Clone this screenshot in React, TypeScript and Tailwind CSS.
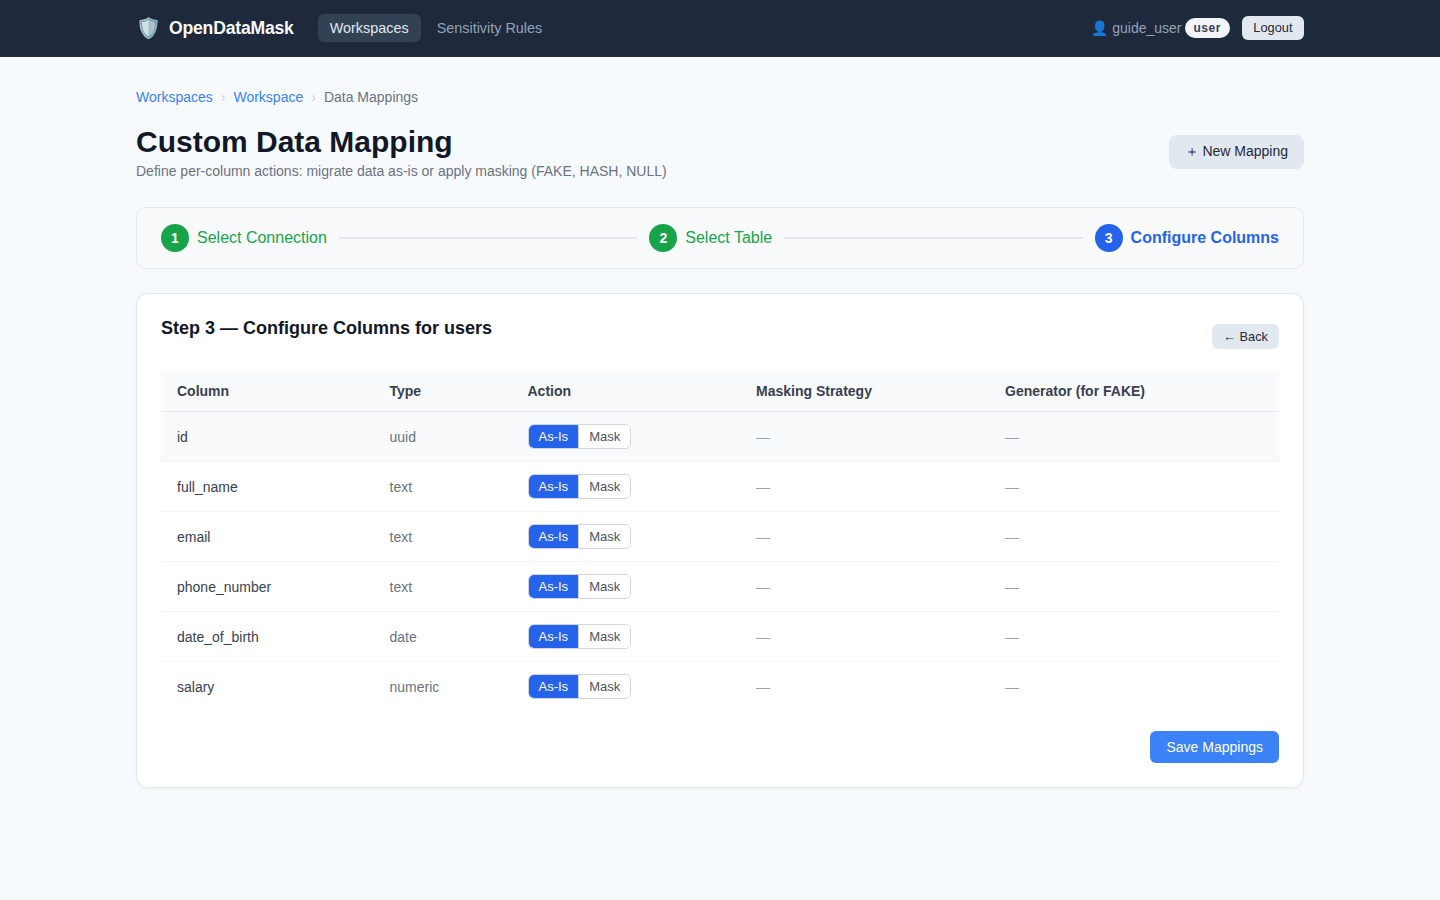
import React from "react";

const font = { fontFamily: '"Liberation Sans", Arial, sans-serif' };

const columns = [
  { name: "id", type: "uuid" },
  { name: "full_name", type: "text" },
  { name: "email", type: "text" },
  { name: "phone_number", type: "text" },
  { name: "date_of_birth", type: "date" },
  { name: "salary", type: "numeric" },
];

const StepBadge: React.FC<{ n: number; color: string }> = ({ n, color }) => (
  <span
    className={`flex h-7 w-7 items-center justify-center rounded-full text-sm font-bold text-white ${color}`}
  >
    {n}
  </span>
);

const ActionToggle = () => (
  <div className="inline-flex overflow-hidden rounded-md border border-[#d1d5db] align-middle">
    <button className="border-r border-[#d1d5db] bg-[#2563eb] px-[10px] py-1 text-[13px] leading-[15px] text-white">
      As-Is
    </button>
    <button className="bg-white px-[10px] py-1 text-[13px] leading-[15px] text-[#4b5563]">
      Mask
    </button>
  </div>
);

export default function App() {
  return (
    <div className="min-h-[900px] bg-[#f7fafd] text-[#111827]" style={font}>
      <header className="h-[57px] border-b border-[#1e293b] bg-[#1e293b]">
        <div className="mx-auto flex h-full w-[1168px] items-center justify-between">
          <div className="flex items-center">
            <span className="flex items-center gap-2 text-[17.6px] font-bold tracking-[-0.2px] text-[#f8fafc]">
              <span className="text-[20px] leading-none tracking-normal">🛡️</span>
              OpenDataMask
            </span>
            <nav className="ml-6 flex items-center gap-1">
              <a className="rounded-md bg-[#334155] px-3 py-[6px] text-[14.4px] leading-4 text-[#e2e8f0]">
                Workspaces
              </a>
              <a className="rounded-md px-3 py-[6px] text-[14.4px] leading-4 text-[#94a3b8]">
                Sensitivity Rules
              </a>
            </nav>
          </div>
          <div className="flex items-center gap-3">
            <span className="flex items-center gap-[3px] text-sm text-[#94a3b8]">
              <span>👤 guide_user</span>
              <span className="rounded-full bg-[#f1f5f9] px-[9px] py-[2px] text-xs leading-[16px] font-bold tracking-[0.5px] text-[#374151]">
                user
              </span>
            </span>
            <button className="rounded-md bg-[#e2e8f0] px-[11.5px] py-1 text-[12.8px] leading-[16px] text-[#1e293b]">
              Logout
            </button>
          </div>
        </div>
      </header>

      <main className="mx-auto w-[1168px] pt-8">
        <nav className="flex items-center gap-2 text-sm leading-4">
          <a className="text-[#3b82f6]">Workspaces</a>
          <span className="text-sm leading-4 text-[#cbd5e1]">›</span>
          <a className="text-[#3b82f6]">Workspace</a>
          <span className="text-sm leading-4 text-[#cbd5e1]">›</span>
          <span className="text-[#6b7280]">Data Mappings</span>
        </nav>

        <div className="mt-[19px] flex items-center justify-between">
          <div>
            <h1 className="text-[30px] leading-9 font-bold text-[#111827]">
              Custom Data Mapping
            </h1>
            <p className="mt-[3px] text-sm leading-4 text-[#6b7280]">
              Define per-column actions: migrate data as-is or apply masking (FAKE, HASH, NULL)
            </p>
          </div>
          <button className="mt-[1px] rounded-lg bg-[#e2e8f0] px-4 pt-[8px] pb-[10px] text-sm leading-4 text-[#1e293b]">
            ＋ New Mapping
          </button>
        </div>

        <div className="mt-[28px] flex h-[62px] items-center gap-3 rounded-[10px] border border-[#e5e7eb] bg-[#f9fafb] px-6">
          <div className="flex items-center gap-2">
            <StepBadge n={1} color="bg-[#16a34a]" />
            <span className="text-base text-[#16a34a]">Select Connection</span>
          </div>
          <div className="h-[2px] flex-1 bg-[#e5e7eb]" />
          <div className="flex items-center gap-2">
            <StepBadge n={2} color="bg-[#16a34a]" />
            <span className="text-base text-[#16a34a]">Select Table</span>
          </div>
          <div className="h-[2px] flex-1 bg-[#e5e7eb]" />
          <div className="flex items-center gap-2">
            <StepBadge n={3} color="bg-[#2563eb]" />
            <span className="text-base font-bold text-[#2563eb]">Configure Columns</span>
          </div>
        </div>

        <section className="mt-6 rounded-xl border border-[#e5e7eb] bg-white px-6 pt-6 pb-6 shadow-[0_1px_3px_rgba(0,0,0,0.05)]">
          <div className="flex items-start justify-between">
            <h2 className="text-lg leading-[21px] font-bold text-[#111827]">
              Step 3 — Configure Columns for users
            </h2>
            <button className="mt-[6px] rounded-md bg-[#e2e8f0] px-[11px] py-[5px] text-[12.8px] leading-[15px] text-[#1e293b]">
              ← Back
            </button>
          </div>

          <table className="mt-[22px] w-full table-fixed border-collapse text-sm">
            <colgroup>
              <col className="w-[212.5px]" />
              <col className="w-[138px]" />
              <col className="w-[228.5px]" />
              <col className="w-[249px]" />
              <col />
            </colgroup>
            <thead>
              <tr className="h-[40px] border-b border-[#e5e7eb] bg-[#f9fafb] text-left font-bold text-[#374151]">
                <th className="px-4">Column</th>
                <th className="px-4">Type</th>
                <th className="px-4">Action</th>
                <th className="px-4">Masking Strategy</th>
                <th className="px-4">Generator (for FAKE)</th>
              </tr>
            </thead>
            <tbody>
              {columns.map((col, i) => (
                <tr
                  key={col.name}
                  className={`h-[50px] ${i < columns.length - 1 ? "border-b border-[#f3f4f6]" : ""} ${i === 0 ? "bg-[#f9fafb]" : ""}`}
                >
                  <td className="px-4 pt-[2px] text-[#374151]">{col.name}</td>
                  <td className="px-4 pt-[2px] text-[#6b7280]">{col.type}</td>
                  <td className="px-4">
                    <ActionToggle />
                  </td>
                  <td className="px-4 pt-[2px] text-[#94a3b8]">—</td>
                  <td className="px-4 pt-[2px] text-[#94a3b8]">—</td>
                </tr>
              ))}
            </tbody>
          </table>

          <div className="mt-[20px] flex justify-end">
            <button className="rounded-md bg-[#3b82f6] px-4 py-2 text-sm leading-4 text-white">
              Save Mappings
            </button>
          </div>
        </section>
      </main>
    </div>
  );
}
